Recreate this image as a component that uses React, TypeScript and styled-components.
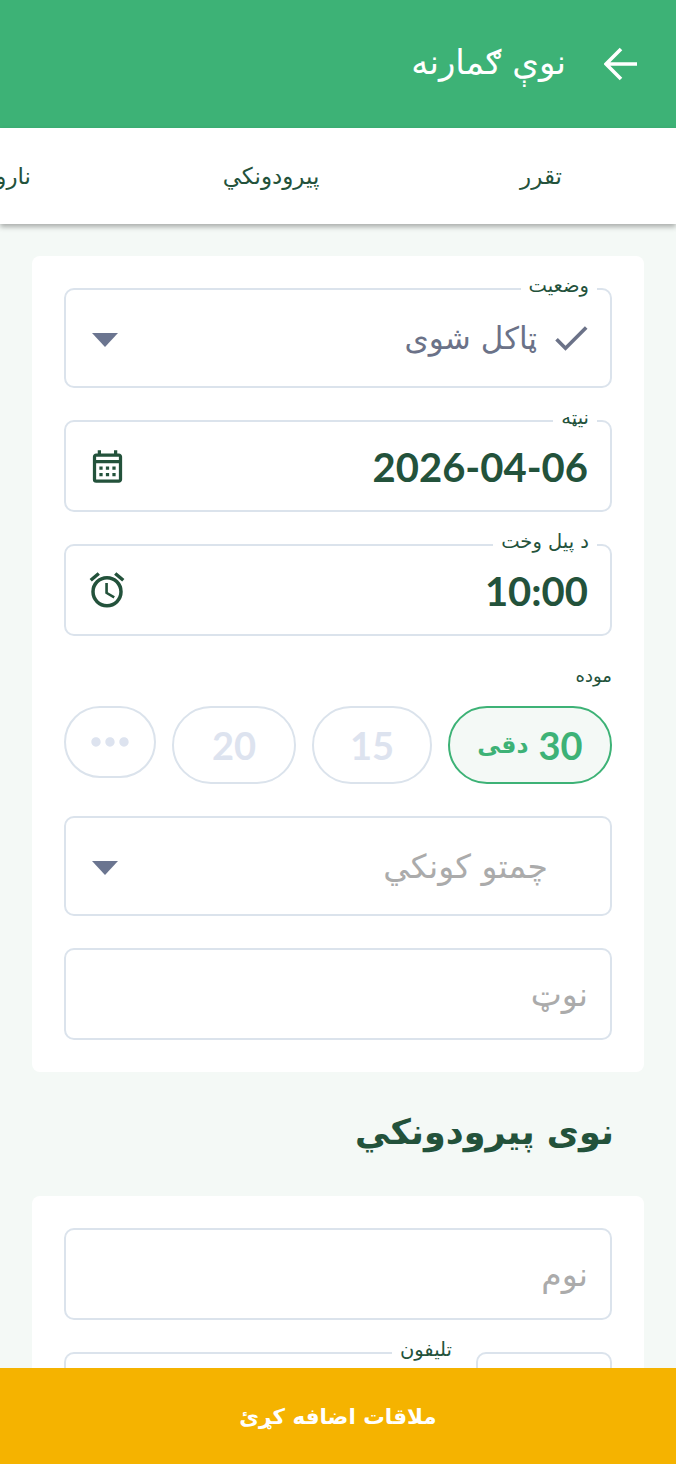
import React from 'react';
import styled, { createGlobalStyle } from 'styled-components';
import { MdCheck, MdMoreHoriz, MdOutlineAlarm, MdOutlineCalendarMonth } from 'react-icons/md';

const green = '#3DB276';
const dark = '#23523B';
const line = '#DBE3EC';
const faint = '#DDE3EF';
const muted = '#ABABAB';
const slate = '#6B7288';
const pageBg = '#F4F9F6';
const arabicFont = '"DejaVu Sans", "Liberation Sans", sans-serif';
const digitFont = 'Lato, "DejaVu Sans", sans-serif';

const GlobalStyle = createGlobalStyle`
  html, body {
    margin: 0;
    height: 100%;
    overflow: hidden;
    background: ${pageBg};
  }
  * {
    box-sizing: border-box;
  }
`;

const Root = styled.div`
  direction: rtl;
  width: 676px;
  height: 1464px;
  overflow: hidden;
  font-family: ${digitFont};
  color: ${dark};
`;

const Header = styled.header`
  display: flex;
  align-items: center;
  gap: 38px;
  height: 128px;
  padding-right: 38px;
  background: ${green};
  color: #fff;
`;

const BackArrow = styled.svg`
  width: 34px;
  height: 34px;
  fill: none;
  stroke: #fff;
  stroke-width: 3.6;
`;

const Title = styled.h1`
  margin: 0 0 4px;
  font-family: ${arabicFont};
  font-size: 34px;
  font-weight: 400;
`;

const Tabs = styled.nav`
  display: flex;
  height: 96px;
  overflow: hidden;
  background: #fff;
  box-shadow: 0 3px 5px rgba(0, 0, 0, 0.3);
`;

const Tab = styled.div`
  flex: 0 0 270px;
  display: flex;
  align-items: center;
  justify-content: center;
  font-family: ${arabicFont};
  font-size: 23px;
`;

const Main = styled.main`
  display: flex;
  flex-direction: column;
  padding: 32px 32px 0;
`;

const Card = styled.section`
  display: flex;
  flex-direction: column;
  gap: 32px;
  padding: 32px;
  border-radius: 8px;
  background: #fff;
`;

const Field = styled.div<{ $height: number }>`
  position: relative;
  display: flex;
  align-items: center;
  justify-content: space-between;
  flex: 0 0 ${(p) => p.$height}px;
  padding: 0 22px;
  border: 2px solid ${line};
  border-radius: 10px;
  background: #fff;
`;

const FloatingLabel = styled.label<{ $right?: number }>`
  position: absolute;
  top: -16px;
  right: ${(p) => p.$right ?? 13}px;
  padding: 0 8px;
  background: #fff;
  font-family: ${arabicFont};
  font-size: 19.5px;
  line-height: 24px;
`;

const Value = styled.span`
  padding-top: 2px;
  font-family: ${digitFont};
  font-size: 40px;
  font-weight: 700;
  line-height: 1;
`;

const SelectValue = styled.span`
  display: flex;
  align-items: center;
  gap: 12px;
  font-family: ${arabicFont};
  font-size: 31px;
  color: ${slate};
`;

const CheckIcon = styled(MdCheck)`
  margin-right: -5px;
`;

const AlarmIcon = styled(MdOutlineAlarm)`
  margin-left: -2px;
`;

const Placeholder = styled.span<{ $indent?: number }>`
  padding-right: ${(p) => p.$indent ?? 0}px;
  font-family: ${arabicFont};
  font-size: 33px;
  color: ${muted};
`;

const Caret = styled.svg`
  width: 26px;
  height: 14px;
  margin: 4px 0 0 4px;
  fill: #6B7590;
`;

const Group = styled.div`
  display: flex;
  flex-direction: column;
  gap: 22px;
`;

const GroupLabel = styled.div`
  font-family: ${arabicFont};
  font-size: 18px;
  line-height: 16px;
`;

const Chips = styled.div`
  display: flex;
  align-items: flex-start;
  gap: 16px;
`;

const Chip = styled.div<{ $active?: boolean; $width: number }>`
  display: flex;
  align-items: center;
  justify-content: center;
  gap: 10px;
  width: ${(p) => p.$width}px;
  height: 78px;
  border: 2px solid ${(p) => (p.$active ? green : line)};
  border-radius: 39px;
  background: ${(p) => (p.$active ? pageBg : '#fff')};
  color: ${(p) => (p.$active ? green : faint)};
  font-size: 38px;
  font-weight: 700;
`;

const ChipUnit = styled.span`
  font-family: ${arabicFont};
  font-size: 23.5px;
`;

const MoreChip = styled(Chip)`
  height: 72px;
  border-radius: 36px;
`;

const SectionTitle = styled.h2`
  margin: 30px 0 34px;
  padding-right: 30px;
  font-family: ${arabicFont};
  font-size: 35px;
  line-height: 60px;
  font-weight: 700;
`;

const PhoneRow = styled.div`
  display: flex;
  gap: 16px;
  height: 92px;
`;

const CodeField = styled(Field)`
  flex: 0 0 136px;
`;

const PhoneField = styled(Field)`
  flex: 1;
  border-right: 0;
  border-top-right-radius: 0;
  border-bottom-right-radius: 0;
`;

const SubmitBar = styled.button`
  position: fixed;
  right: 0;
  bottom: 0;
  left: 0;
  height: 96px;
  border: 0;
  background: #F5B300;
  color: #fff;
  font-family: ${arabicFont};
  font-size: 21.5px;
  font-weight: 700;
`;

const DropCaret = () => (
  <Caret viewBox="0 0 26 14">
    <path d="M0 0h26L13 14z" />
  </Caret>
);

export default function App() {
  return (
    <Root>
      <GlobalStyle />
      <Header>
        <BackArrow viewBox="0 0 34 34">
          <path d="M33 17H2M17 2 2 17l15 15" />
        </BackArrow>
        <Title>نوې ګمارنه</Title>
      </Header>
      <Tabs>
        <Tab>تقرر</Tab>
        <Tab>پیرودونکي</Tab>
        <Tab>ناروغه</Tab>
      </Tabs>
      <Main>
        <Card>
          <Field $height={100}>
            <FloatingLabel>وضعیت</FloatingLabel>
            <SelectValue>
              <CheckIcon size={44} />
              ټاکل شوی
            </SelectValue>
            <DropCaret />
          </Field>
          <Field $height={92}>
            <FloatingLabel>نیټه</FloatingLabel>
            <Value>2026-04-06</Value>
            <MdOutlineCalendarMonth size={39} />
          </Field>
          <Field $height={92}>
            <FloatingLabel>د پیل وخت</FloatingLabel>
            <Value>10:00</Value>
            <AlarmIcon size={42} />
          </Field>
          <Group>
            <GroupLabel>موده</GroupLabel>
            <Chips>
              <Chip $active $width={164}>
                30 <ChipUnit>دقی</ChipUnit>
              </Chip>
              <Chip $width={120}>15</Chip>
              <Chip $width={124}>20</Chip>
              <MoreChip $width={92}>
                <MdMoreHoriz size={56} />
              </MoreChip>
            </Chips>
          </Group>
          <Field $height={100}>
            <Placeholder $indent={40}>چمتو کونکي</Placeholder>
            <DropCaret />
          </Field>
          <Field $height={92}>
            <Placeholder>نوټ</Placeholder>
          </Field>
        </Card>
        <SectionTitle>نوی پیرودونکي</SectionTitle>
        <Card>
          <Field $height={92}>
            <Placeholder>نوم</Placeholder>
          </Field>
          <PhoneRow>
            <CodeField $height={92} />
            <PhoneField $height={92}>
              <FloatingLabel $right={0}>تلیفون</FloatingLabel>
            </PhoneField>
          </PhoneRow>
        </Card>
      </Main>
      <SubmitBar>ملاقات اضافه کړئ</SubmitBar>
    </Root>
  );
}
